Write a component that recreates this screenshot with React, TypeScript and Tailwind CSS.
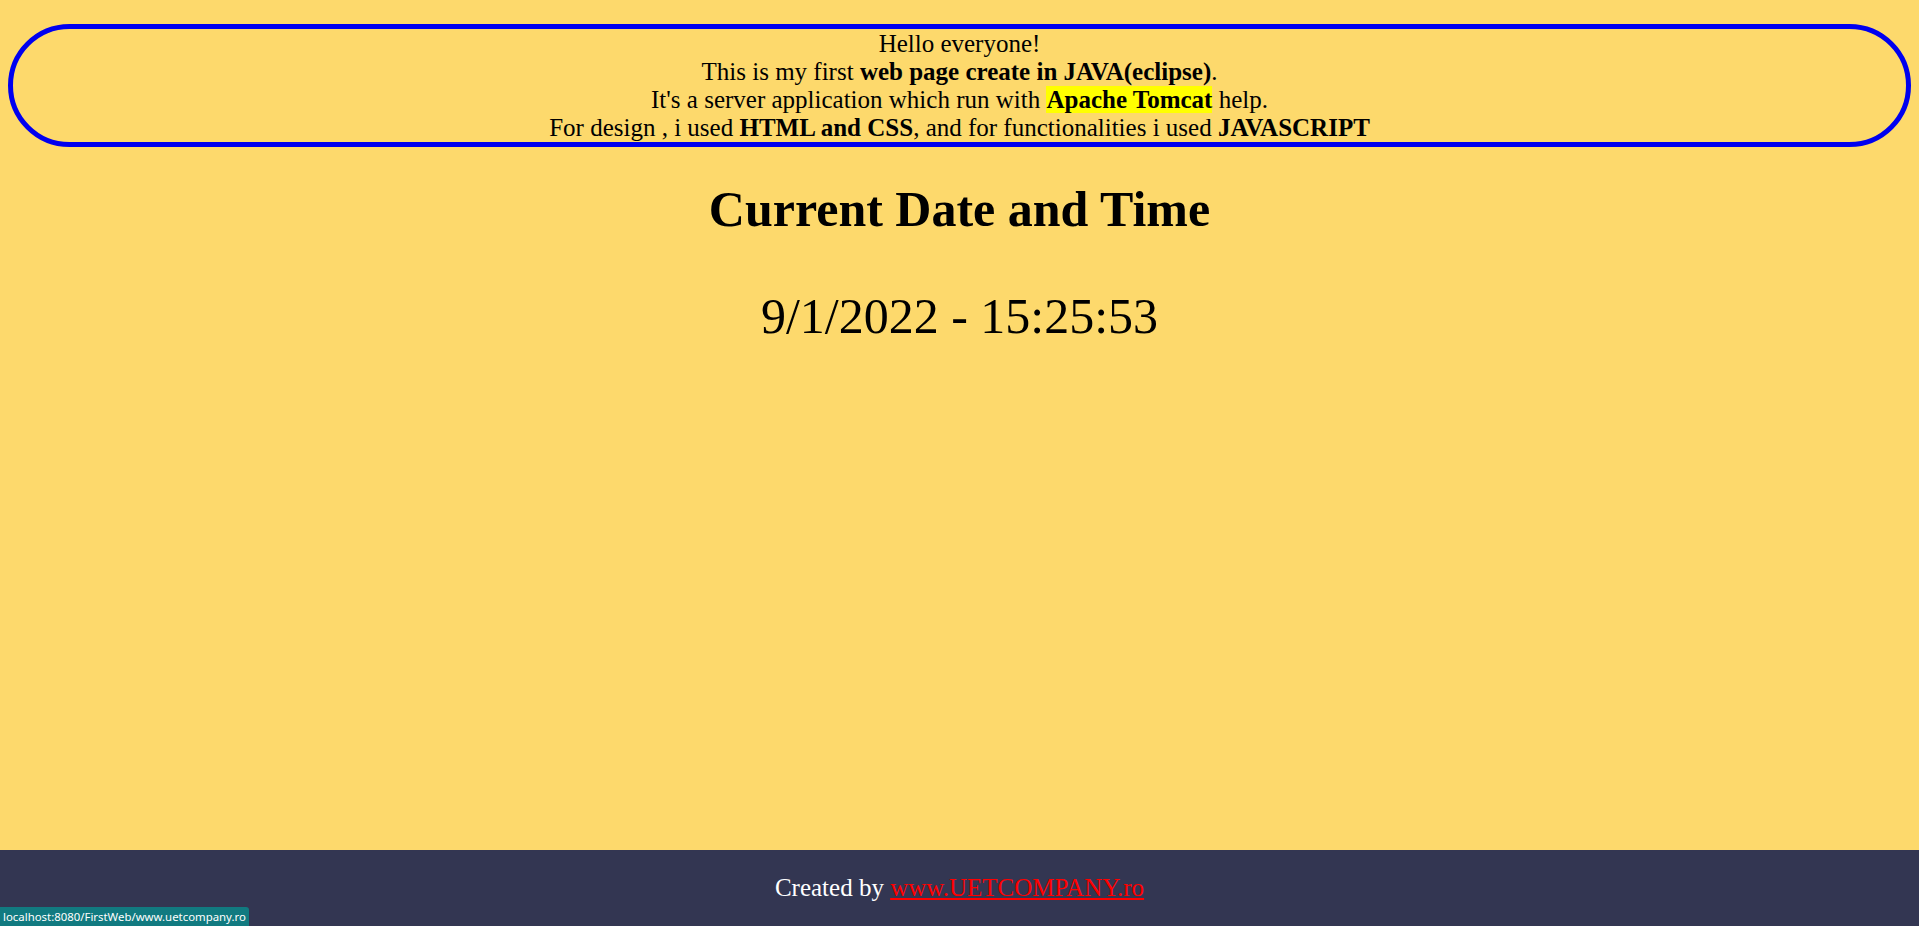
export default function App() {
  return (
    <div className="relative flex min-h-screen flex-col bg-[#fdd96c] font-['Liberation_Serif','Times_New_Roman',serif] text-black">
      {/* Intro pill */}
      <div className="mx-2 mt-6 rounded-full border-[5px] border-[#0000f0] pt-px text-center text-[25px] leading-[28px]">
        <p>Hello everyone!</p>
        <p>
          This is my first <b>web page create in JAVA(eclipse)</b>.
        </p>
        <p>
          It's a server application which run with <b className="bg-[#ffff00]">Apache Tomcat</b> help.
        </p>
        <p>
          For design , i used <b>HTML and CSS</b>, and for functionalities i used <b>JAVASCRIPT</b>
        </p>
      </div>

      <main className="flex flex-1 flex-col items-center">
        <h1 className="mt-[33px] text-[50px] font-bold leading-[58px]">Current Date and Time</h1>
        <p className="mt-[49px] text-[50px] leading-[58px]">9/1/2022 - 15:25:53</p>
      </main>

      <footer className="flex h-[76px] items-center justify-center bg-[#333652] text-[25px] text-white">
        <span>
          Created by{" "}
          <a href="#" className="text-[#ff0000] underline">
            www.UETCOMPANY.ro
          </a>
        </span>
      </footer>

      {/* browser status bubble */}
      <div className="absolute bottom-0 left-0 rounded-tr-[3px] bg-[#117a80] px-[3px] font-['Noto_Sans',sans-serif] text-[11.4px] leading-[19px] text-white">
        localhost:8080/FirstWeb/www.uetcompany.ro
      </div>
    </div>
  );
}
